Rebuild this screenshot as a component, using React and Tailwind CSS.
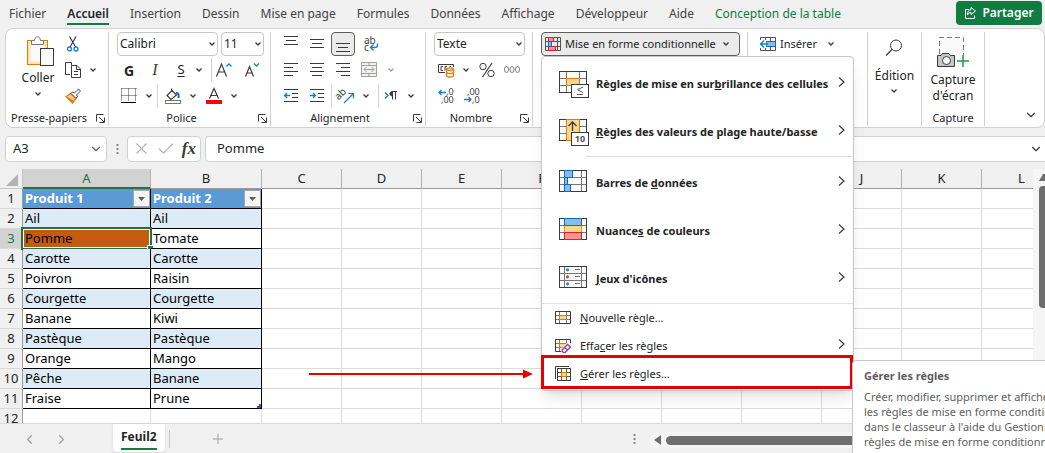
import React from 'react';
import { ChevronDown, ChevronLeft, ChevronRight, Plus, X, Check } from 'lucide-react';

const TABS = [
  'Fichier',
  'Accueil',
  'Insertion',
  'Dessin',
  'Mise en page',
  'Formules',
  'Données',
  'Affichage',
  'Développeur',
  'Aide',
];

const COLUMNS = ['C', 'D', 'E', 'F', 'G', 'H', 'I', 'J', 'K', 'L'];

const ROWS = [
  ['Ail', 'Ail'],
  ['Pomme', 'Tomate'],
  ['Carotte', 'Carotte'],
  ['Poivron', 'Raisin'],
  ['Courgette', 'Courgette'],
  ['Banane', 'Kiwi'],
  ['Pastèque', 'Pastèque'],
  ['Orange', 'Mango'],
  ['Pêche', 'Banane'],
  ['Fraise', 'Prune'],
];

function Icon({ w = 16, h = 16, children }) {
  return (
    <svg width={w} height={h} viewBox={`0 0 ${w} ${h}`} fill="none" stroke="#3b3a39" className="shrink-0 overflow-visible" aria-hidden="true">
      {children}
    </svg>
  );
}

function Caret({ color = '#3b3a39' }) {
  return (
    <Icon w={8} h={6}>
      <path d="M1.5 1.5L4 4L6.5 1.5" stroke={color} strokeWidth="1.3" />
    </Icon>
  );
}

function Divider() {
  return <div className="w-px h-6 bg-[#d1d1d1]" />;
}

function Tool({ label, active, children }) {
  return (
    <button
      aria-label={label}
      className={`flex items-center justify-center w-6 h-6 rounded ${
        active ? 'border border-[#605e5c] bg-[#ebebeb]' : ''
      }`}
    >
      {children}
    </button>
  );
}

function CaretTool({ label, color }) {
  return (
    <button aria-label={label} className="flex items-center justify-center w-4 h-6">
      <Caret color={color} />
    </button>
  );
}

function Picker({ label, value, className }) {
  return (
    <div className={`relative h-6 ${className}`}>
      <select
        aria-label={label}
        defaultValue={value}
        className="appearance-none w-full h-6 pl-[2px] rounded border border-[#c8c6c4] bg-white text-[12px] text-[#242424]"
      >
        <option>{value}</option>
      </select>
      <div className="absolute right-[2px] top-[9px] pointer-events-none">
        <Caret />
      </div>
    </div>
  );
}

function Group({ label, launcher, className, children }) {
  return (
    <div className={`flex flex-col shrink-0 border-r border-[#d1d1d1] ${className}`}>
      <div className="flex-1">{children}</div>
      <div className={`relative flex items-center justify-center h-4 text-[11px] text-[#242424] ${launcher ? 'pr-4' : ''}`}>
        {label}
        {launcher && (
          <button aria-label={`Options ${label}`} className="absolute right-[3px] top-1">
            <Icon w={9} h={9}>
              <path d="M0.5 7.5V0.5H7.5M3 3L8 8M8.5 3.5V8.5H3.5" />
            </Icon>
          </button>
        )}
      </div>
    </div>
  );
}

function Lines({ rows }) {
  return (
    <Icon w={14} h={16}>
      {rows.map(([x, y, w]) => (
        <path key={y} d={`M${x} ${y}.5H${x + w}`} />
      ))}
    </Icon>
  );
}

function IndentIcon({ right }) {
  return (
    <Icon w={14} h={16}>
      <path d="M0 1.5H14M8 5.5H14M8 9.5H14M0 13.5H14" />
      {right ? (
        <path d="M0 7.5H5.5M3 5L5.5 7.5L3 10" stroke="#0f7fd1" strokeWidth="1.3" />
      ) : (
        <path d="M0.5 7.5H6M3 5L0.5 7.5L3 10" stroke="#0f7fd1" strokeWidth="1.3" />
      )}
    </Icon>
  );
}

function FormatIcon() {
  return (
    <Icon w={16} h={15}>
      <path d="M0.5 0.5H15.5V13.5H0.5ZM0 4.5H16M0 9.5H16M3.5 0V14M12.5 0V14" stroke="#55534f" />
      <path d="M3.5 0.5H8.5V4.5H3.5ZM3.5 9.5H10.5V13.5H3.5Z" fill="#ff9098" stroke="#e02020" />
      <path d="M3.5 4.5H6.5V9.5H3.5Z" fill="#83beec" stroke="#0f6cbd" />
    </Icon>
  );
}

// 28x22 sheet that the large menu icons are drawn on
function SheetFrame({ left = 5.5, right = 22.5 }) {
  return (
    <>
      <rect x="0.5" y="0.5" width="27" height="21" fill="#fafafa" />
      <path d={`M${left} 1V21M${right} 1V21M1 7.5H27M1 14.5H27`} stroke="#797774" />
      <rect x="0.5" y="0.5" width="27" height="21" />
    </>
  );
}

function HighlightIcon() {
  return (
    <Icon w={30} h={26}>
      <SheetFrame left={7.5} right={20.5} />
      <rect x="7.5" y="7.5" width="13" height="7" fill="#f8d98b" stroke="#e07a10" />
      <rect x="12.5" y="13.5" width="17" height="13" fill="#fff" />
      <path d="M24 16L18.5 18.7L24 21.5M18 23.5H24" stroke="#55534f" />
    </Icon>
  );
}

function TopIcon() {
  return (
    <Icon w={30} h={26}>
      <SheetFrame left={7.5} right={20.5} />
      <rect x="7.5" y="0.5" width="13" height="21" fill="#f8d98b" stroke="#e07a10" />
      <path d="M13.5 12V3M9.5 7L13.5 3L17.5 7" strokeWidth="1.3" />
      <rect x="12.5" y="13.5" width="17" height="13" fill="#fff" />
      <text x="21" y="23" textAnchor="middle" fontSize="9" fill="#55534f" stroke="none">
        10
      </text>
    </Icon>
  );
}

function BarsIcon() {
  return (
    <Icon w={30} h={26}>
      <SheetFrame />
      <g fill="#83beec" stroke="#0f6cbd">
        <path d="M5.5 0.5H13.5V7.5H5.5ZM5.5 7.5H8.5V14.5H5.5ZM5.5 14.5H11.5V21.5H5.5Z" />
      </g>
    </Icon>
  );
}

function ScalesIcon() {
  return (
    <Icon w={30} h={26}>
      <SheetFrame />
      <rect x="5.5" y="7.5" width="17" height="7" fill="#f8d98b" stroke="#e0a010" />
      <rect x="5.5" y="0.5" width="17" height="7" fill="#83beec" stroke="#0f6cbd" />
      <rect x="5.5" y="14.5" width="17" height="7" fill="#ff9098" stroke="#e02020" />
    </Icon>
  );
}

function SetsIcon() {
  return (
    <Icon w={30} h={26}>
      <SheetFrame />
      <g stroke="none">
        <circle cx="8.5" cy="3.8" r="1.6" fill="#2a88d0" />
        <circle cx="8.5" cy="10.8" r="1.6" fill="#e63a3a" />
        <circle cx="8.5" cy="17.8" r="1.6" fill="#2a88d0" />
      </g>
      <path d="M16 3.5H21M16 10.5H21M16 17.5H21" stroke="#797774" />
    </Icon>
  );
}

function RuleIcon({ kind }) {
  if (kind === 'manage') {
    return (
      <Icon w={16} h={16}>
        <path d="M0.5 13V0.5H14" />
        <path d="M2.5 2.5H15.5V14.5H2.5ZM6.5 2.5V14.5M11.5 2.5V14.5M2.5 6.5H15.5M2.5 10.5H15.5" stroke="#55534f" />
        <rect x="6.5" y="6.5" width="5" height="4" fill="#f8d98b" stroke="#e07a10" />
        <path d="M2.5 2.5H15.5V14.5H2.5Z" />
      </Icon>
    );
  }
  return (
    <Icon w={16} h={16}>
      <path d="M4.5 1V14M11.5 1V14M0 5.5H16M0 9.5H16" stroke="#797774" />
      <rect x="4.5" y="5.5" width="7" height="4" fill="#f8d98b" stroke="#e07a10" />
      <path d="M0.5 1.5H15.5V13.5H0.5Z" />
      {kind === 'clear' && (
        <>
          <path d="M6 11L13 4L17 6V16H6Z" fill="#fff" stroke="none" />
          <path d="M7 12L12.5 6.5L15.5 9L10 14.5H8.5L7 13ZM9.5 9.5L12.5 12" fill="#fff" stroke="#9b3fa8" strokeWidth="1.4" />
        </>
      )}
    </Icon>
  );
}

function MenuArrow() {
  return (
    <Icon w={7} h={18}>
      <path d="M1 2.5L6 7L1 11.5" strokeWidth="1.2" />
    </Icon>
  );
}

function MenuItem({ icon, children }) {
  return (
    <button role="menuitem" className="flex items-center w-full h-12 pl-[17px] pr-2 text-left text-[11px] font-bold text-[#242424]">
      {icon}
      <span className="flex-1 ml-[7px] whitespace-nowrap">{children}</span>
      <MenuArrow />
    </button>
  );
}

function SmallItem({ kind, arrow, children }) {
  return (
    <button role="menuitem" className="flex items-center gap-[9px] w-full h-7 pl-[13px] pr-2 text-left text-[11px] text-[#242424]">
      <RuleIcon kind={kind} />
      <span className="flex-1">{children}</span>
      {arrow && <MenuArrow />}
    </button>
  );
}

function FormatMenu() {
  return (
    <div role="menu" className="absolute left-0 top-6 z-20 w-[313px] pt-[3px] pb-[2px] rounded border border-[#c8c6c4] bg-white shadow-lg">
      <MenuItem icon={<HighlightIcon />}>
        Règles de mise en sur<u>b</u>rillance des cellules
      </MenuItem>
      <MenuItem icon={<TopIcon />}>
        <u>R</u>ègles des valeurs de plage haute/basse
      </MenuItem>
      <div className="h-px ml-11 bg-[#e1dfdd]" />
      <div className="pt-[2px]">
        <MenuItem icon={<BarsIcon />}>
          Barres de <u>d</u>onnées
        </MenuItem>
        <MenuItem icon={<ScalesIcon />}>
          Nuance<u>s</u> de couleurs
        </MenuItem>
        <MenuItem icon={<SetsIcon />}>
          <u>J</u>eux d'icônes
        </MenuItem>
      </div>
      <div className="h-px bg-[#e1dfdd]" />
      <SmallItem kind="new">
        <u>N</u>ouvelle règle...
      </SmallItem>
      <SmallItem kind="clear" arrow>
        Effa<u>c</u>er les règles
      </SmallItem>
      <div className="relative">
        <SmallItem kind="manage">
          <u>G</u>érer les règles...
        </SmallItem>
        <div className="absolute -top-[5px] -bottom-px -left-px right-0 border-3 border-[#e60000] pointer-events-none" />
        <svg width="224" height="12" className="absolute right-full top-2 mr-[9px]" aria-hidden="true">
          <path d="M0 6H216" stroke="#e60000" strokeWidth="2" />
          <path d="M214 1.5L224 6L214 10.5Z" fill="#e60000" />
        </svg>
        <Tooltip />
      </div>
    </div>
  );
}

function Tooltip() {
  return (
    <div
      role="tooltip"
      className="absolute left-full top-0 -ml-px w-72 h-28 px-[11px] pt-[5px] border border-[#c8c6c4] rounded bg-white text-[11px] leading-[15px] whitespace-nowrap text-[#605e5c]"
    >
      <div className="font-bold leading-5">Gérer les règles</div>
      <p className="mt-[3px]">
        Créer, modifier, supprimer et afficher
        <br />
        les règles de mise en forme conditionnelle
        <br />
        dans le classeur à l'aide du Gestionnaire
        <br />
        règles de mise en forme conditionnelle
      </p>
    </div>
  );
}

function Ribbon() {
  return (
    <div className="relative flex h-[100px] ml-[5px] pt-[3px] pb-px rounded-lg border border-[#d1d1d1] bg-white text-[12px] text-[#242424]">
      <Group label="Presse-papiers" launcher className="w-[103px]">
        <div className="flex">
          <button className="flex flex-col items-center w-11 ml-[10px] pt-1">
            <Icon w={32} h={31}>
              <g transform="translate(5 0)">
                <rect x="0.5" y="4.5" width="20" height="24" fill="#fbe5a8" stroke="#e07a10" />
                <rect x="3.5" y="7.5" width="14" height="18" fill="#fafafa" stroke="none" />
                <path d="M4.5 8.5V4.5H7.5C8 -0.5 13 -0.5 13.5 4.5H16.5V8.5Z" fill="#fff" stroke="#797774" />
                <rect x="13.5" y="12.5" width="13" height="17" fill="#fafafa" />
              </g>
            </Icon>
            <span className="mt-px mb-[3px] leading-5">Coller</span>
            <Caret />
          </button>
          <div className="flex flex-col gap-[2px] ml-px">
            <Tool label="Couper">
              <Icon>
                <path d="M4.5 0.5L10.5 11M11 0.5L5 11" strokeWidth="1.2" />
                <circle cx="4.5" cy="13" r="2" stroke="#0f7fd1" strokeWidth="1.3" />
                <circle cx="11" cy="13" r="2" stroke="#0f7fd1" strokeWidth="1.3" />
              </Icon>
            </Tool>
            <div className="flex">
              <Tool label="Copier">
                <Icon>
                  <path d="M5 12.5H0.5V0.5H6.5V3" />
                  <path d="M6.5 3.5H12L15.5 7V15.5H6.5ZM11.5 3.5V7.5H15.5M9 9.5H13M9 12.5H13" />
                </Icon>
              </Tool>
              <CaretTool label="Options de copie" />
            </div>
            <Tool label="Reproduire la mise en forme">
              <Icon>
                <path d="M1 8.5L6 5.5L11 10.5L7.5 15Z" fill="#fbc98b" stroke="#e07a10" strokeWidth="1.3" />
                <path d="M3 10.5L8.5 13.5" stroke="#e07a10" strokeWidth="1.5" />
                <path d="M6 5.5L7.5 4L9.5 5L13.5 1L15.5 3L11.5 7L12.5 8.5L11 10.5Z" fill="#fff" />
              </Icon>
            </Tool>
          </div>
        </div>
      </Group>

      <Group label="Police" launcher className="w-[162px]">
        <div className="flex flex-col gap-[2px] pl-2">
          <div className="flex gap-[3px]">
            <Picker label="Police" value="Calibri" className="w-[101px]" />
            <Picker label="Taille" value="11" className="w-[43px]" />
          </div>
          <div className="flex items-center">
            <Tool label="Gras">
              <span className="text-[14px] font-bold">G</span>
            </Tool>
            <Tool label="Italique">
              <span className="ml-1 font-['Liberation_Serif',serif] text-[16px] italic text-[#3b3a39]">I</span>
            </Tool>
            <Tool label="Souligné">
              <span className="ml-2 text-[13px] underline underline-offset-2">S</span>
            </Tool>
            <div className="w-[2px]" />
            <CaretTool label="Options de soulignement" />
            <div className="w-1" />
            <Divider />
            <Tool label="Agrandir la police">
              <Icon>
                <path d="M0.5 14.5L5.5 2L10.5 14.5M2.3 10H8.7" strokeWidth="1.2" />
                <path d="M10.5 4.5L13 2L15.5 4.5" stroke="#0f7fd1" strokeWidth="1.3" />
              </Icon>
            </Tool>
            <div className="w-1" />
            <Tool label="Réduire la police">
              <Icon>
                <path d="M1.5 14.5L5.5 4.5L9.5 14.5M3 11H8" strokeWidth="1.2" />
                <path d="M10 1.5L12.5 4L15 1.5" stroke="#0f7fd1" strokeWidth="1.3" />
              </Icon>
            </Tool>
          </div>
          <div className="flex items-center">
            <Tool label="Bordures">
              <Icon>
                <path d="M0.5 0.5H15.5M0.5 7.5H15.5" strokeDasharray="1 1" />
                <path d="M0.5 0.5V13M7.5 0.5V13M14.5 0.5V13" strokeDasharray="1 1" />
                <path d="M0 14.5H15" stroke="#000" />
              </Icon>
            </Tool>
            <CaretTool label="Options de bordure" />
            <Divider />
            <div className="w-[3px]" />
            <Tool label="Remplissage">
              <Icon>
                <path d="M6.5 0.5V4M7 2.5L11.5 7L6 11.5L2 7.5Z" fill="#fff" strokeWidth="1.2" />
                <path d="M11 5C13.5 4.5 14 7 13.5 10" stroke="#0f6cbd" strokeWidth="2" />
                <rect x="0.5" y="12.5" width="15" height="3" fill="#fff" stroke="#797774" />
              </Icon>
            </Tool>
            <CaretTool label="Couleur de remplissage" />
            <div className="w-px" />
            <Tool label="Couleur de police">
              <Icon>
                <path d="M3.5 10.5L8 0.5L12.5 10.5M5 7.5H11" strokeWidth="1.2" />
                <rect y="12" width="16" height="4" fill="#f00" stroke="none" />
              </Icon>
            </Tool>
            <CaretTool label="Choix de la couleur" />
          </div>
        </div>
      </Group>

      <Group label="Alignement" launcher className="w-[155px]">
        <div className="flex flex-col gap-[2px] pl-2">
          <div className="flex gap-[2px]">
            <Tool label="Haut">
              <Lines rows={[[0, 0, 14], [2, 4, 10], [0, 8, 14]]} />
            </Tool>
            <Tool label="Milieu">
              <Lines rows={[[0, 3, 14], [2, 7, 10], [0, 11, 14]]} />
            </Tool>
            <Tool label="Bas" active>
              <Lines rows={[[0, 7, 14], [2, 11, 10], [0, 15, 14]]} />
            </Tool>
            <div className="ml-[2px]">
              <Tool label="Renvoyer à la ligne">
                <Icon>
                  <text x="1" y="8" fontSize="10" fill="#3b3a39" stroke="none">ab</text>
                  <text x="1" y="15" fontSize="10" fill="#3b3a39" stroke="none">c</text>
                  <path d="M14.5 7.5V9C14.5 11 13.5 11.5 12 11.5H8M10.5 8.5L7.5 11.5L10.5 14.5" stroke="#0f7fd1" strokeWidth="1.3" />
                </Icon>
              </Tool>
            </div>
          </div>
          <div className="flex gap-[2px]">
            <Tool label="Aligner à gauche">
              <Lines rows={[[0, 1, 14], [0, 5, 9], [0, 9, 14], [0, 13, 9]]} />
            </Tool>
            <Tool label="Centrer">
              <Lines rows={[[0, 1, 14], [2, 5, 10], [0, 9, 14], [2, 13, 10]]} />
            </Tool>
            <Tool label="Aligner à droite">
              <Lines rows={[[0, 1, 14], [5, 5, 9], [0, 9, 14], [5, 13, 9]]} />
            </Tool>
            <Tool label="Fusionner">
              <Icon>
                <path
                  d="M0.5 0.5H15.5V14.5H0.5ZM0.5 3.5H15.5M0.5 11.5H15.5M8 0.5V3.5M8 11.5V14.5M3 7.5H13M5.5 5L3 7.5L5.5 10M10.5 5L13 7.5L10.5 10"
                  fill="#f3f2f1"
                  stroke="#a19f9d"
                />
              </Icon>
            </Tool>
            <CaretTool label="Options de fusion" color="#a19f9d" />
          </div>
          <div className="flex items-center">
            <Tool label="Diminuer le retrait">
              <IndentIcon />
            </Tool>
            <div className="ml-[2px]">
              <Tool label="Augmenter le retrait">
                <IndentIcon right />
              </Tool>
            </div>
            <div className="w-[2px]" />
            <Divider />
            <div className="ml-[2px]">
              <Tool label="Orientation">
                <Icon>
                  <text x="-1" y="9" fontSize="10" fill="#3b3a39" stroke="none" transform="rotate(-45 4 9)">ab</text>
                  <path d="M6 15L15 6M10.5 5.5H15.5V10.5" stroke="#0f7fd1" strokeWidth="1.2" />
                </Icon>
              </Tool>
            </div>
            <CaretTool label="Options d'orientation" />
            <div className="w-1" />
            <Divider />
            <Tool label="Sens du texte">
              <Icon>
                <path d="M2 4.5L5 7.5L2 10.5" stroke="#0f7fd1" strokeWidth="1.4" />
                <path d="M9.5 11.5V3.5H14M12.5 3.5V11.5" />
                <path d="M9.5 3.5C6 3.5 6 8 9.5 8Z" fill="#3b3a39" />
              </Icon>
            </Tool>
            <CaretTool label="Options du sens du texte" />
          </div>
        </div>
      </Group>

      <Group label="Nombre" launcher className="w-[107px]">
        <div className="flex flex-col gap-[2px] pl-2">
          <Picker label="Format de nombre" value="Texte" className="w-[91px]" />
          <div className="flex items-center">
            <Tool label="Format comptable">
              <Icon>
                <path d="M7 10.5H0.5V2.5H15.5V5M5 4.5H3V8.5H5M9 4.5H7V8.5M11.5 4.5H13" />
                <path d="M8.5 7C8.5 5.5 15.5 5.5 15.5 7V13.5C15.5 15.5 8.5 15.5 8.5 13.5Z" fill="#fff" stroke="#e07a10" strokeWidth="1.3" />
                <path d="M8.5 7.5C10 8.8 14 8.8 15.5 7.5M8.5 10.5C10 12 14 12 15.5 10.5" stroke="#e07a10" strokeWidth="1.3" />
              </Icon>
            </Tool>
            <CaretTool label="Options comptables" />
            <div className="w-px" />
            <Tool label="Pourcentage">
              <Icon>
                <circle cx="4" cy="4.5" r="3.2" />
                <circle cx="12" cy="11.5" r="3.2" />
                <path d="M13 1L3.5 15" strokeWidth="1.2" />
              </Icon>
            </Tool>
            <div className="w-px" />
            <Tool label="Séparateur de milliers">
              <Icon>
                <ellipse cx="2.5" cy="7.5" rx="2" ry="3" stroke="#797774" />
                <ellipse cx="8" cy="7.5" rx="2" ry="3" stroke="#797774" />
                <ellipse cx="13.5" cy="7.5" rx="2" ry="3" stroke="#797774" />
              </Icon>
            </Tool>
          </div>
          <div className="flex gap-[2px]">
            <Tool label="Ajouter une décimale">
              <Icon>
                <path d="M1 4.5H8M3.5 2L1 4.5L3.5 7" stroke="#0f7fd1" strokeWidth="1.3" />
                <text x="8" y="7" fontSize="9" fill="#3b3a39" stroke="none">,0</text>
                <text x="3" y="15" fontSize="9" fill="#3b3a39" stroke="none">,00</text>
              </Icon>
            </Tool>
            <Tool label="Réduire les décimales">
              <Icon>
                <text x="3" y="7" fontSize="9" fill="#3b3a39" stroke="none">,00</text>
                <path d="M0 11.5H7M4.5 9L7 11.5L4.5 14" stroke="#0f7fd1" strokeWidth="1.3" />
                <text x="8" y="15" fontSize="9" fill="#3b3a39" stroke="none">,0</text>
              </Icon>
            </Tool>
          </div>
        </div>
      </Group>

      <div className="shrink-0 w-[215px] pl-2 border-r border-[#d1d1d1]">
        <div className="relative w-[199px]">
          <button aria-expanded="true" className="flex items-center gap-1 w-full h-6 pl-[3px] rounded border border-[#605e5c] bg-[#ebebeb] text-[11px]">
            <FormatIcon />
            <span className="mr-[2px] whitespace-nowrap">Mise en forme conditionnelle</span>
            <Caret />
          </button>
          <FormatMenu />
        </div>
      </div>

      <div className="shrink-0 w-[120px] pl-3 border-r border-[#d1d1d1]">
        <button className="flex items-center gap-1 h-6 text-[11px]">
          <Icon w={16} h={15}>
            <path d="M0.5 0.5H15.5V13.5H0.5ZM0 4.5H16M0 9.5H16M5.5 0V14M10.5 0V14" stroke="#55534f" />
            <rect x="6" y="4.5" width="9.5" height="5" fill="#83beec" stroke="#0f6cbd" />
            <path d="M-1 3H6V11H-1Z" fill="#fff" stroke="none" />
            <path d="M0.5 7H8M4 3.5L0.5 7L4 10.5" stroke="#0f7fd1" strokeWidth="1.3" />
          </Icon>
          <span>Insérer</span>
          <span className="ml-[6px]">
            <Caret />
          </span>
        </button>
      </div>

      <div className="shrink-0 flex justify-center w-[54px] border-r border-[#d1d1d1]">
        <button className="flex flex-col items-center h-16 pt-[7px]">
          <Icon w={18} h={17}>
            <circle cx="11" cy="6.5" r="5.5" />
            <path d="M7 10.5L1 16.5" strokeWidth="1.3" />
          </Icon>
          <span className="mt-[10px] mb-[2px] leading-5">Édition</span>
          <Caret />
        </button>
      </div>

      <Group label="Capture" className="w-[63px]">
        <button className="flex flex-col items-center w-full pt-1 leading-4">
          <Icon w={34} h={32}>
            <path d="M3.5 18V1.5H27.5V19" fill="#fafafa" strokeDasharray="5 3" stroke="#797774" />
            <path d="M1.5 19.5H5L6.5 17.5H13L14.5 19.5H18.5V30.5H1.5Z" fill="#c8c6c4" />
            <circle cx="10.5" cy="24.5" r="4" fill="#fff" />
            <path d="M27 19V31M21 25H33" stroke="#1f9b4b" strokeWidth="1.5" />
          </Icon>
          <span className="mt-1">Capture</span>
          <span>d'écran</span>
        </button>
      </Group>

      <button aria-label="Réduire le ruban" className="absolute right-[6px] bottom-[5px] text-[#3b3a39]">
        <ChevronDown size={14} strokeWidth={2} />
      </button>
    </div>
  );
}

function FormulaBar() {
  return (
    <div className="flex items-center h-[41px] pl-[5px] text-[#242424]">
      <div className="flex items-center w-[102px] h-[26px] pl-[7px] pr-[3px] rounded border border-[#d1d1d1] bg-white">
        <input aria-label="Zone Nom" defaultValue="A3" className="flex-1 min-w-0 bg-transparent text-[13px]" />
        <ChevronDown size={14} strokeWidth={2} className="text-[#605e5c]" />
      </div>
      <div className="flex justify-center w-5">
        <Dots />
      </div>
      <div className="flex items-center justify-between w-[74px] h-[26px] px-1 rounded border border-[#d1d1d1] bg-white">
        <button aria-label="Annuler" className="text-[#b3b0ad]">
          <X size={19} strokeWidth={1.4} />
        </button>
        <button aria-label="Entrer" className="text-[#b3b0ad]">
          <Check size={20} strokeWidth={1.4} />
        </button>
        <button aria-label="Insérer une fonction" className="font-['Liberation_Serif',serif] text-[17px] leading-6 font-bold italic text-[#3b3a39]">
          fx
        </button>
      </div>
      <div className="flex flex-1 items-center h-[26px] ml-1 pl-[11px] pr-[2px] rounded-l border border-r-0 border-[#d1d1d1] bg-white">
        <input aria-label="Barre de formule" defaultValue="Pomme" className="flex-1 min-w-0 bg-transparent text-[13px]" />
        <ChevronDown size={14} strokeWidth={2} className="text-[#3b3a39]" />
      </div>
    </div>
  );
}

function Dots() {
  return (
    <Icon w={3} h={12}>
      <path d="M1.5 1V3M1.5 5V7M1.5 9V11" stroke="#8a8886" strokeWidth="2" />
    </Icon>
  );
}

function FilterHeader({ children }) {
  return (
    <td className="h-5 p-0 border-r border-b border-black bg-[#5b9bd5] text-white font-bold">
      <div className="flex items-center justify-between h-[19px] pl-[2px]">
        {children}
        <button aria-label={`Filtrer ${children}`} className="flex items-center justify-center w-[17px] h-[17px] border border-[#a6a6a6] bg-[#f5f5f5]">
          <Icon w={7} h={4}>
            <path d="M0 0H7L3.5 4Z" fill="#605e5c" stroke="none" />
          </Icon>
        </button>
      </div>
    </td>
  );
}

function RowNumber({ n, active }) {
  return (
    <th
      className={`h-5 p-0 border-r border-b border-r-[#9b9b9b] border-b-[#d9d9d9] font-normal ${
        active ? 'bg-[#d2d2d2] text-[#217346]' : 'bg-[#f0f0f0] text-[#242424]'
      }`}
    >
      {n}
    </th>
  );
}

function BlankCells() {
  return COLUMNS.map((c) => <td key={c} className="h-5 p-0 border-r border-b border-[#dcdcdc]" />);
}

function Sheet() {
  return (
    <div className="flex-1 min-w-0 overflow-hidden bg-white">
      <table className="table-fixed w-[1062px] border-separate border-spacing-0 text-[13px] leading-[19px] text-black">
        <colgroup>
          <col className="w-[23px]" />
          <col className="w-32" />
          <col className="w-[111px]" />
          {COLUMNS.map((c) => (
            <col key={c} className="w-20" />
          ))}
        </colgroup>
        <thead className="bg-[#f0f0f0] text-[#242424]">
          <tr>
            <th aria-label="Tout sélectionner" className="h-5 p-0 border-r border-b border-[#c6c6c6]">
              <div className="flex justify-end pr-1 pt-[2px]">
                <Icon w={12} h={12}>
                  <path d="M12 0V12H0Z" fill="#b3b3b3" stroke="none" />
                </Icon>
              </div>
            </th>
            <th className="h-5 p-0 border-r border-r-[#b3b3b3] border-b-2 border-b-[#217346] bg-[#d2d2d2] font-normal leading-[18px] text-[#217346]">A</th>
            <th className="h-5 p-0 border-r border-b border-r-[#b3b3b3] border-b-[#9b9b9b] font-normal">B</th>
            {COLUMNS.map((c) => (
              <th key={c} className="h-5 p-0 border-r border-b border-r-[#b3b3b3] border-b-[#9b9b9b] font-normal">
                {c}
              </th>
            ))}
          </tr>
        </thead>
        <tbody>
          <tr>
            <RowNumber n={1} />
            <FilterHeader>Produit 1</FilterHeader>
            <FilterHeader>Produit 2</FilterHeader>
            <BlankCells />
          </tr>
          {ROWS.map(([a, b], i) => (
            <tr key={i}>
              <RowNumber n={i + 2} active={i === 1} />
              <td
                className={`relative h-5 p-0 pl-[2px] border-r border-b border-black ${
                  i === 1 ? 'bg-[#c55a11]' : i % 2 === 0 ? 'bg-[#ddebf7]' : ''
                }`}
              >
                {a}
                {i === 1 && (
                  <div className="absolute -left-[2px] -right-[2px] -top-[2px] -bottom-[2px] border-2 border-[#217346]">
                    <div className="h-full border border-white" />
                    <div className="absolute -right-[3px] -bottom-[3px] w-[6px] h-[6px] border-t border-l border-white bg-[#217346]" />
                  </div>
                )}
              </td>
              <td className={`relative h-5 p-0 pl-[2px] border-r border-b border-black ${i % 2 === 0 ? 'bg-[#ddebf7]' : ''}`}>
                {b}
                {i === ROWS.length - 1 && (
                  <svg width="4" height="4" className="absolute right-0 bottom-0" aria-hidden="true">
                    <path d="M4 0V4H0V2H2V0Z" fill="#4450a8" />
                  </svg>
                )}
              </td>
              <BlankCells />
            </tr>
          ))}
          <tr>
            <RowNumber n={12} />
            <td className="p-0 border-r border-b border-[#dcdcdc]" />
            <td className="p-0 border-r border-b border-[#dcdcdc]" />
            <BlankCells />
          </tr>
        </tbody>
      </table>
    </div>
  );
}

export default function App() {
  return (
    <div className="flex flex-col h-screen overflow-hidden bg-[#f0f0f0] font-['Noto_Sans',sans-serif]">
      <header className="flex justify-between h-7 shrink-0 pl-[9px] pr-[3px] text-[12px] text-[#424242]">
        <nav className="flex gap-[21px] leading-[27px] whitespace-nowrap">
          {TABS.map((tab) => (
            <a
              key={tab}
              href="#"
              className={tab === 'Accueil' ? 'h-[25px] border-b-2 border-[#107c41] font-semibold text-[#242424]' : 'h-[25px]'}
            >
              {tab}
            </a>
          ))}
          <a href="#" className="text-[#107c41]">
            Conception de la table
          </a>
        </nav>
        <button className="flex items-center justify-center gap-[6px] w-[86px] h-6 mt-px rounded bg-[#107c41] font-semibold text-white">
          <Icon w={12} h={12}>
            <path d="M5 2.5H1.5V11.5H10.5V8.5M7 0.5L11.5 4L7 7.5V5.5C5 5.5 4 6.5 3.5 8C3.5 5 4.5 3 7 2.5Z" stroke="#fff" />
          </Icon>
          Partager
        </button>
      </header>

      <Ribbon />
      <FormulaBar />

      <main className="flex flex-1 min-h-0">
        <Sheet />
        <div className="flex flex-col items-end w-3 shrink-0 bg-[#f5f5f5]">
          <div className="flex justify-end pt-1">
            <Icon w={6} h={8}>
              <path d="M0 8L4 1H6V8Z" fill="#6e6e6e" stroke="none" />
            </Icon>
          </div>
          <div className="w-[6px] h-[122px] mt-[5px] rounded-l bg-[#6e6e6e]" />
        </div>
      </main>

      <footer className="flex items-start h-[30px] shrink-0 border-t border-[#d9d9d9] text-[#a19f9d]">
        <button aria-label="Feuille précédente" className="ml-[22px] mt-2">
          <ChevronLeft size={15} strokeWidth={2} />
        </button>
        <button aria-label="Feuille suivante" className="ml-[17px] mt-2">
          <ChevronRight size={15} strokeWidth={2} />
        </button>
        <button className="h-7 px-2 ml-11 rounded-b bg-white text-[12px] font-bold text-[#242424] shadow-sm">
          <span className="block leading-[22px] border-b-2 border-[#107c41]">Feuil2</span>
        </button>
        <div className="w-px h-[18px] mt-[6px] ml-1 bg-[#c8c6c4]" />
        <button aria-label="Nouvelle feuille" className="ml-10 mt-[7px]">
          <Plus size={16} strokeWidth={1.5} />
        </button>
        <div className="flex flex-1 justify-end pt-[9px] pr-[14px]">
          <Dots />
        </div>
        <div className="flex items-center w-[395px] h-4 mt-2 pl-1 rounded-l-lg bg-[#f5f5f5]">
          <Icon w={8} h={10}>
            <path d="M7 0V10L0 5Z" fill="#6e6e6e" stroke="none" />
          </Icon>
          <div className="flex-1 h-[9px] ml-1 rounded-l-lg bg-[#6e6e6e]" />
        </div>
      </footer>
    </div>
  );
}
